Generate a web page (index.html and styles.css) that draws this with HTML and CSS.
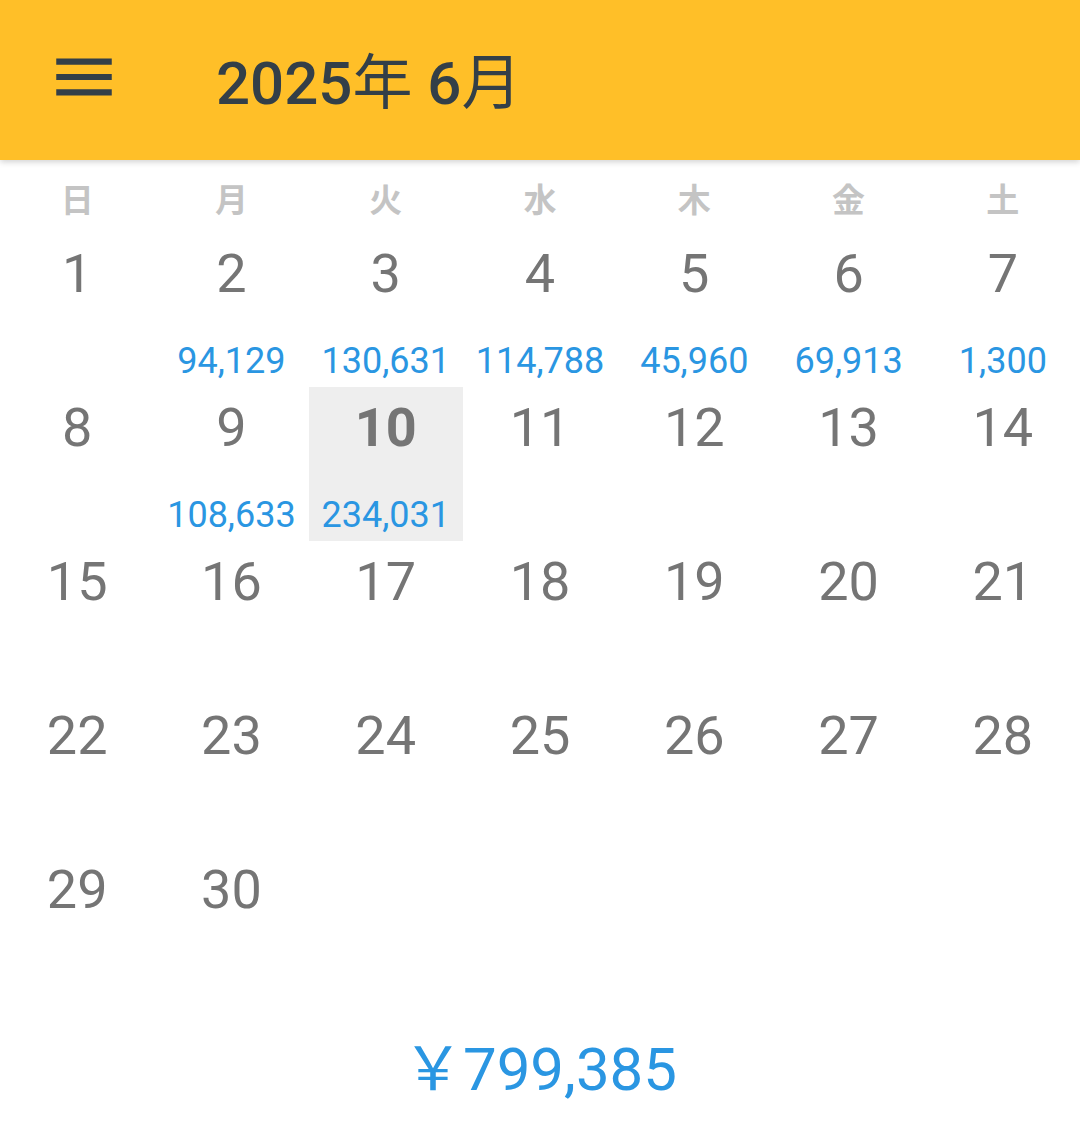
FILE: index.html
```html
<!DOCTYPE html>
<html lang="ja">
<head>
  <meta charset="UTF-8" />
  <meta name="viewport" content="width=device-width, initial-scale=1.0" />
  <title>カレンダー</title>
  <link rel="stylesheet" href="styles.css">
</head>
<body>
  <header class="appbar">
    <button class="menu-btn" aria-label="menu">
      <svg viewBox="0 0 24 24" width="74" height="74"><path d="M3 18h18v-2H3v2zm0-5h18v-2H3v2zm0-7v2h18V6H3z" fill="currentColor"/></svg>
    </button>
    <h1 class="title">2025<span class="kanji">年</span> 6<span class="kanji">月</span></h1>
  </header>

  <div class="weekdays">
    <span>日</span><span>月</span><span>火</span><span>水</span><span>木</span><span>金</span><span>土</span>
  </div>

  <div class="month" id="month"></div>

  <div class="total">￥799,385</div>

  <script>
    // 売上データ（日付 → 金額）
    const sales = { 2: '94,129', 3: '130,631', 4: '114,788', 5: '45,960', 6: '69,913', 7: '1,300', 9: '108,633', 10: '234,031' };
    const today = 10;
    const month = document.getElementById('month');
    for (let d = 1; d <= 30; d++) {
      const cell = document.createElement('div');
      cell.className = 'day' + (d === today ? ' today' : '');
      cell.innerHTML = `<span class="num">${d}</span><span class="amount">${sales[d] || ''}</span>`;
      month.appendChild(cell);
    }
  </script>
</body>
</html>
```

FILE: styles.css
```css
:root {
  --amber: #ffbf28;
  --ink: #333f48;
  --gray: #757575;
  --blue: #2a96e2;
}
body {
  margin: 0;
  font-family: Roboto, "Noto Sans CJK JP", sans-serif;
  background: #fff;
}
.appbar {
  height: 160px;
  background: var(--amber);
  display: flex;
  align-items: center;
  box-shadow: 0 2px 6px rgba(0, 0, 0, 0.18);
  position: relative;
  z-index: 1;
}
.menu-btn {
  border: none;
  background: none;
  padding: 0;
  margin: 0 0 6px 47px;
  color: var(--ink);
  display: flex;
}
.title {
  margin: 0 0 6px 95px;
  font-size: 60px;
  font-weight: 500;
  color: var(--ink);
}
.title .kanji {
  font-family: "Noto Sans CJK JP", sans-serif;
  font-weight: 400;
}
.weekdays {
  display: grid;
  grid-template-columns: repeat(7, 1fr);
  height: 73px;
  align-items: center;
  text-align: center;
  font-family: "Noto Sans CJK JP", sans-serif;
  font-weight: 700;
  font-size: 33px;
  color: #c4c4c4;
}
.weekdays span { padding-top: 2px; }
.month {
  display: grid;
  grid-template-columns: repeat(7, 1fr);
  grid-auto-rows: 154px;
}
.day {
  display: flex;
  flex-direction: column;
  justify-content: space-between;
  align-items: center;
  padding: 14px 0 6px;
}
.day .num {
  font-size: 54px;
  line-height: 54px;
  color: var(--gray);
}
.day .amount {
  font-size: 36px;
  line-height: 40px;
  color: var(--blue);
}
.day.today { background: #eeeeee; }
.day.today .num { font-weight: 700; }
.total {
  text-align: center;
  font-size: 60px;
  color: var(--blue);
  padding-top: 17px;
}
```
